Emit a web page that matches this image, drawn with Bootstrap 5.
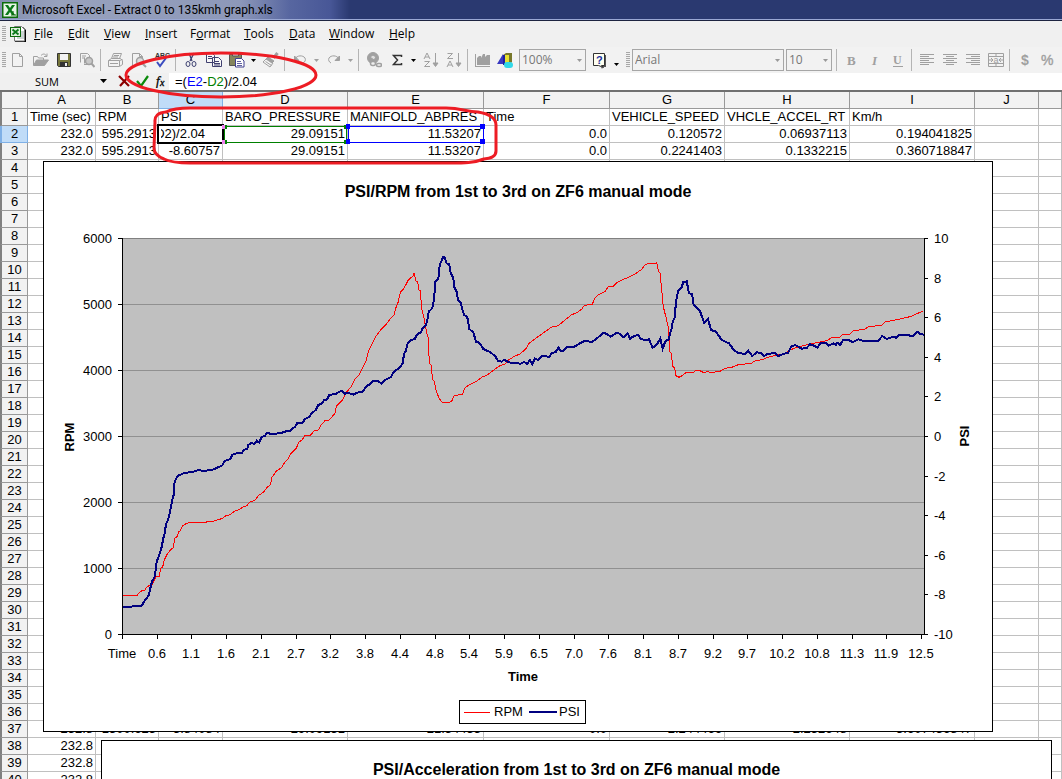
<!DOCTYPE html>
<html lang="en">
<head>
<meta charset="utf-8">
<meta name="viewport" content="width=device-width, initial-scale=1">
<title>Microsoft Excel - Extract 0 to 135kmh graph.xls</title>
<link href="https://cdn.jsdelivr.net/npm/bootstrap@5.3.0/dist/css/bootstrap.min.css" rel="stylesheet">
<style>
  body { font: 12px/16px "Open Sans", "Noto Sans", sans-serif; color: #000; background: #fff; }
  .excel { height: 100vh; }
  .title-bar, .menu-bar, .tool-bar, .formula-bar { flex: none; }
  .title-bar { height: 21px; padding-left: 2px; gap: 4px; border-bottom: 1px solid #1d2440; box-shadow: inset 0 -1px #9aa8d4;
    background: linear-gradient(90deg, #8490b0 0, #98a2bd 60px, #8d98b9 240px, #5766a0 290px, #485797 330px, #2a3970 350px); }
  .title-bar h1 { font: 400 12px/18px Roboto, sans-serif; }
  .chrome { background: #f0f0f0; }
  .menu-bar, .tool-bar { height: 26px; }
  .tool-bar { background: #f2f2f2; }
  .grip { width: 4px; height: 16px; margin-left: 2px; flex: none;
    background: repeating-linear-gradient(#a8a8a8 0 1px, #f0f0f0 1px 2px); }
  .menus { display: grid; grid-template-columns: 34px 36px 41px 45px 54px 45px 40px 60px 40px; }
  .menus button, .tb, .arrow { border: 0; background: none; padding: 0; color: inherit; }
  .menus button { padding-left: 8px; text-align: left; white-space: nowrap; }
  .tb { width: 23px; height: 22px; flex: none; line-height: 0; }
  .arrow { width: 11px; height: 22px; flex: none; line-height: 0; }
  .menus button.off, .tb.off, .arrow.off { color: #a0a0a0; }
  .divide { width: 1px; height: 22px; margin: 0 3px 0 2px; background: #b4b4b4; flex: none; }
  .pick { appearance: none; height: 22px; border: 1px solid #a6a6a6; border-radius: 0; padding: 0 2px 1px; color: #777; flex: none;
    font: 12px/18px "Open Sans", "Noto Sans", sans-serif; background: #f2f2f2 url("data:image/svg+xml,%3Csvg xmlns='http://www.w3.org/2000/svg' width='5' height='3'%3E%3Cpath d='M0 0h5L2.500 3z' fill='%23999'/%3E%3C/svg%3E") no-repeat right 3px center; opacity: 1; }
  .pick-zoom { width: 67px; margin: 0 2px; }
  .pick-font { width: 152px; margin: 0 2px; }
  .pick-size { width: 46px; margin-right: 2px; }
  .formula-bar { height: 17px; }
  .name-box { width: 94px; border: 0; background: none; text-align: center; font-size: 11px; line-height: 15px; padding: 0; height: 16px; }
  .fb { width: 18px; height: 16px; border: 0; background: none; padding: 0; line-height: 0; flex: none; }
  .fb-list { margin-right: 3px; }
  .formula { font: 13px/17px "Liberation Sans", sans-serif; background: #fff; padding-left: 6px; outline: 0; white-space: pre; }
  .ref-e { color: #00f; } .ref-d { color: #008000; }
  .sheet { border-top: 2px solid #707070; font: 13px/16px "Liberation Sans", sans-serif; min-height: 0; }
  .grid-table { table-layout: fixed; width: 100%; border-collapse: separate; border-spacing: 0; }
  .grid-table th, .grid-table td { height: 17px; line-height: 16px; padding: 0 2px; font-weight: 400; white-space: nowrap; overflow: hidden; border: 0 solid #c0c0c0; border-width: 0 1px 1px 0; }
  .grid-table th { background: #f2f2f2; text-align: center; border-color: #999; }
  .grid-table th:first-child { border-left: 2px solid #808080; }
  .grid-table th.picked { background: #c0dcf8; border-color: #7fb0e6; }
  .num { text-align: right; }
  .editing { display: flex; justify-content: flex-end; overflow: hidden; padding-right: 14px; margin-right: 1px; }
  .float-chart { position: absolute; background: #fff; border: 1px solid #000; }
  .chart-rpm { left: 43px; top: 69px; }
  .chart-accel { left: 101px; top: 648px; width: 951px; height: 200px; }
  .chart-accel h2 { font-size: 16px; line-height: 20px; font-weight: 700; margin: 19px 0 0; }
  .marks { position: absolute; left: 0; top: 0; pointer-events: none; }
  svg text { font-family: "Liberation Sans", sans-serif; }
  .axis-label { font-size: 13px; }
  .axis-name { font-size: 13px; font-weight: 700; }
</style>
</head>
<body class="overflow-hidden">
<div class="excel d-flex flex-column position-relative overflow-hidden">
  <header class="title-bar d-flex align-items-center">
    <svg width="16" height="16" viewBox="0 0 16 16"><rect width="16" height="16" fill="#0b6b0b"/><rect x="1.500" y="1.500" width="13" height="13" fill="#e8f5e8"/><path d="M3 3h3l2 3 2-3h3L9.500 8l3.500 5h-3L8 10l-2 3H3l3.500-5z" fill="#0b7a1a"/><path d="M11 9v4M9 13h5" stroke="#0b6b0b"/></svg>
    <h1 class="m-0">Microsoft Excel - Extract 0 to 135kmh graph.xls</h1>
  </header>

  <nav class="chrome menu-bar d-flex align-items-center" aria-label="Menu">
    <span class="grip"></span>
    <svg class="ms-1 flex-shrink-0" width="16" height="17" viewBox="0 0 16 17"><path d="M5 1h8l3 3v12H5z" fill="#000"/><path d="M4.500.500h7l3 3V15h-10z" fill="#fff" stroke="#777"/><path d="M10 6h4M10 8h4M7 12h7M7 10h7" stroke="#9aa"/><rect y="1" width="11" height="10" fill="#0b6b0b"/><rect x="1" y="2" width="9" height="8" fill="#dff0df"/><path d="M2.500 3.500l6 5M8.500 3.500l-6 5" stroke="#0b7a1a" stroke-width="1.800"/></svg>
    <div class="menus">
      <button type="button"><u>F</u>ile</button><button type="button"><u>E</u>dit</button><button type="button"><u>V</u>iew</button><button type="button"><u>I</u>nsert</button><button type="button">F<u>o</u>rmat</button><button type="button"><u>T</u>ools</button><button type="button"><u>D</u>ata</button><button type="button"><u>W</u>indow</button><button type="button"><u>H</u>elp</button>
    </div>
  </nav>

  <div class="tool-bar d-flex align-items-center" role="toolbar" aria-label="Standard and formatting">
    <span class="grip"></span>
    <button type="button" class="tb off" aria-label="New"><svg width="16" height="16" fill="none" stroke="currentColor"><path d="M2.500 1.500h7l3 3v10h-10zM9.500 1.500v3h3"/></svg></button>
    <button type="button" class="tb off" aria-label="Open"><svg width="18" height="16" fill="none" stroke="currentColor"><path d="M9 3.500c2-2 4-2 5.500.500M15 1.500v3h-3"/><path d="M1.500 13V4.500h4l1 1.500h5v2" /><path d="M1.500 13.500l3-5.500h12l-4 5.500z" fill="currentColor"/></svg></button>
    <button type="button" class="tb" aria-label="Save"><svg width="16" height="16"><path d="M1.500 1.500h13v13h-12l-1-1z" fill="#77773c" stroke="#333"/><path d="M4 2h8v6H4z" fill="#f2f2f2"/><path d="M4 10h8v4H4z" fill="#333"/><path d="M9 11h2v3H9z" fill="#eee"/></svg></button>
    <button type="button" class="tb off" aria-label="Search"><svg width="16" height="16" fill="none" stroke="currentColor"><path d="M1.500 10.500v-9h7l2 2v3M3 4h4M3 6h3M5.500 11.500v-6M5 12.500h4"/><circle cx="10" cy="9" r="3.500" fill="#c8c8c8" stroke-width="1.500"/><path d="M12.500 11.500l3 3.500" stroke-width="2"/></svg></button>
    <span class="divide"></span>
    <button type="button" class="tb off" aria-label="Print"><svg width="17" height="16" fill="none" stroke="currentColor"><path d="M4.500 6.500l2-5h8l-2 5M7 3.500h5M6 5h5M1.500 8.500l3-2h9l2 2v4l-3 2h-11zM1.500 8.500h11v5.500M12.500 8.500l3-1M3 11.500h8"/></svg></button>
    <button type="button" class="tb off" aria-label="Print preview"><svg width="16" height="16" fill="none" stroke="currentColor"><path d="M5 14.500H1.500v-13h7l3 3v2M8.500 1.500v3h3"/><circle cx="9" cy="9" r="3.500" fill="#ddd" stroke-width="1.500"/><path d="M11.500 11.500l3.500 3.500" stroke-width="2"/></svg></button>
    <button type="button" class="tb" aria-label="Spelling"><svg width="17" height="18"><text x="2" y="7" font-size="7" font-weight="700" fill="#333">ABC</text><path d="M4 11l3 4 6-8" fill="none" stroke="#3a4cc0" stroke-width="2"/></svg></button>
    <span class="divide"></span>
    <button type="button" class="tb" aria-label="Cut"><svg width="16" height="16" fill="none" stroke="#3c4070"><path d="M6 1l3 8M11 1L7 9" stroke-width="1.300"/><ellipse cx="5" cy="12" rx="2" ry="2.500"/><ellipse cx="11" cy="12" rx="2" ry="2.500"/></svg></button>
    <button type="button" class="tb" aria-label="Copy"><svg width="16" height="16" fill="#f8f8f8" stroke="#404070"><path d="M.500 1.500h6l2 2v7h-8zM6.500 5.500h6l3 3v6h-9z"/><path d="M2 4.500h4M2 6.500h4M8 9.500h5M8 11.500h6M8 13h6"/></svg></button>
    <button type="button" class="tb" aria-label="Paste"><svg width="17" height="16"><path d="M1.500 2.500h12v11h-12z" fill="#85855c" stroke="#555"/><path d="M4.500 1h6v3h-6z" fill="#ddd" stroke="#555"/><path d="M7.500 6.500h6l2.500 2.500v6H7.500z" fill="#fff" stroke="#404090"/><path d="M9 9.500h4M9 11.500h5M9 13.500h5" stroke="#6060a0"/></svg></button>
    <button type="button" class="arrow" aria-label="Paste options"><svg width="5" height="3"><path d="M0 0h5L2.500 3z"/></svg></button>
    <button type="button" class="tb off" aria-label="Format painter"><svg width="17" height="16" fill="none" stroke="currentColor"><path d="M15.500 1l-4 5" stroke-width="3"/><path d="M6 5l6 4-2 2-6-4z" fill="currentColor"/><path d="M4 7l-3 3 7 5 3-4M3.500 9.500l6 4" /></svg></button>
    <span class="divide"></span>
    <button type="button" class="tb off" aria-label="Undo"><svg width="16" height="16" fill="none" stroke="currentColor"><path d="M3 7c2-4 8-4 10-1 1 2 0 4-2 5"/><path d="M2.500 4v4.500H7z" fill="currentColor"/></svg></button>
    <button type="button" class="arrow off" aria-label="Undo list"><svg width="5" height="3" fill="currentColor"><path d="M0 0h5L2.500 3z"/></svg></button>
    <button type="button" class="tb off" aria-label="Redo"><svg width="16" height="16" fill="none" stroke="currentColor"><path d="M13 7C11 3 5 3 3 6c-1 2 0 4 2 5"/><path d="M13.500 4v4.500H9z" fill="currentColor"/></svg></button>
    <button type="button" class="arrow off" aria-label="Redo list"><svg width="5" height="3" fill="currentColor"><path d="M0 0h5L2.500 3z"/></svg></button>
    <span class="divide"></span>
    <button type="button" class="tb off" aria-label="Insert hyperlink"><svg width="16" height="16" fill="none" stroke="currentColor"><circle cx="7" cy="6" r="5.500" fill="currentColor"/><path d="M4 5l3-2 3 2-2 3z" fill="#ddd"/><rect x="4.500" y="9.500" width="5" height="4" rx="2" fill="#eee" stroke-width="1.500"/><rect x="10.500" y="11.500" width="5" height="3" rx="1.500" stroke-width="1.500"/></svg></button>
    <button type="button" class="tb" aria-label="AutoSum"><svg width="16" height="16"><path d="M12.500 5V3.500h-8L8.500 8l-4 4.500h8V11" fill="none" stroke="#333" stroke-width="1.500"/></svg></button>
    <button type="button" class="arrow" aria-label="AutoSum options"><svg width="5" height="3"><path d="M0 0h5L2.500 3z"/></svg></button>
    <button type="button" class="tb off" aria-label="Sort ascending"><svg width="16" height="16" fill="none" stroke="currentColor"><path d="M1 7l3-6 3 6M2 5h4M1.500 9.500h5l-5 5h5.500"/><path d="M12.500 1v13M10 11l2.500 3.500L15 11z" fill="currentColor"/></svg></button>
    <button type="button" class="tb off" aria-label="Sort descending"><svg width="16" height="16" fill="none" stroke="currentColor"><path d="M1.500 1.500h5l-5 5H7M1 15l3-6 3 6M2 13h4"/><path d="M12.500 1v13M10 11l2.500 3.500L15 11z" fill="currentColor"/></svg></button>
    <span class="divide"></span>
    <button type="button" class="tb off" aria-label="Chart wizard"><svg width="16" height="16" fill="currentColor"><path d="M0 2h1v12h14v1H0zM2 6l2-2h2v2l2-4h2v3l2-2h3v10H2z"/></svg></button>
    <button type="button" class="tb" aria-label="Drawing"><svg width="17" height="17"><path d="M6 3l3-2h6v9l-2 2H6z" fill="#77772a"/><path d="M6 3h6v8H6z" fill="#e8e030"/><path d="M0 12L6 2v10z" fill="#3838c0"/><path d="M7 3v10" stroke="#2020a0" stroke-width="2"/><rect x="7" y="10" width="9" height="6" rx="3" fill="#30d8e8"/></svg></button>
    <select class="pick pick-zoom" aria-label="Zoom"><option>100%</option></select>
    <button type="button" class="tb" aria-label="Help"><svg width="16" height="17"><path d="M4 3h10v12h-3l-1 2z" fill="#555"/><path d="M1.500 1.500h11v12h-3l2 2-5-2h-5z" fill="#fffff0" stroke="#333"/><text x="4" y="12" font-size="11" font-weight="700" fill="#2030a0">?</text></svg></button>
    <button type="button" class="arrow pt-2" aria-label="Toolbar options"><svg width="5" height="3"><path d="M0 0h5L2.500 3z"/></svg></button>
    <span class="grip ms-1"></span>
    <select class="pick pick-font" aria-label="Font"><option>Arial</option></select>
    <select class="pick pick-size" aria-label="Font size"><option>10</option></select>
    <span class="divide"></span>
    <button type="button" class="tb off" aria-label="Bold"><svg width="16" height="16" fill="currentColor"><text x="3" y="13" font-size="13" font-weight="700" style="font-family:'Liberation Serif',serif">B</text></svg></button>
    <button type="button" class="tb off" aria-label="Italic"><svg width="16" height="16" fill="currentColor"><text x="5" y="13" font-size="13" font-weight="700" font-style="italic" style="font-family:'Liberation Serif',serif">I</text></svg></button>
    <button type="button" class="tb off" aria-label="Underline"><svg width="16" height="16" fill="currentColor"><text x="3" y="12" font-size="12" font-weight="700" style="font-family:'Liberation Serif',serif">U</text><path d="M3 14h10v1H3z"/></svg></button>
    <span class="divide"></span>
    <button type="button" class="tb off" aria-label="Align left"><svg width="16" height="16" stroke="currentColor"><path d="M1 2.500h14M1 4.500h9M1 6.500h14M1 8.500h9M1 10.500h14M1 12.500h9"/></svg></button>
    <button type="button" class="tb off" aria-label="Centre"><svg width="16" height="16" stroke="currentColor"><path d="M1 2.500h14M4 4.500h8M1 6.500h14M4 8.500h8M1 10.500h14M4 12.500h8"/></svg></button>
    <button type="button" class="tb off" aria-label="Align right"><svg width="16" height="16" stroke="currentColor"><path d="M1 2.500h14M6 4.500h9M1 6.500h14M6 8.500h9M1 10.500h14M6 12.500h9"/></svg></button>
    <button type="button" class="tb off" aria-label="Merge and centre"><svg width="16" height="16" fill="none" stroke="currentColor"><path d="M.500 1.500h15v13H.500zM.500 4.500h15M.500 11.500h15M8 1v3M8 12v3M1 8h4M11 8h4M3 6l2 2-2 2M13 6l-2 2 2 2"/><text x="5.500" y="11" font-size="9" fill="currentColor" stroke="none">a</text></svg></button>
    <span class="divide"></span>
    <button type="button" class="tb off" aria-label="Currency"><svg width="16" height="16" fill="currentColor"><text x="4" y="13" font-size="14" font-weight="700">$</text></svg></button>
    <button type="button" class="tb off" aria-label="Percent"><svg width="16" height="16" fill="currentColor"><text x="1" y="13" font-size="14" stroke="currentColor" stroke-width=".4">%</text></svg></button>
  </div>

  <div class="chrome formula-bar d-flex">
    <input class="name-box" aria-label="Name box" value="SUM">
    <button type="button" class="fb fb-list" aria-label="Name list"><svg width="7" height="4"><path d="M0 0h7L3.500 4z"/></svg></button>
    <button type="button" class="fb" aria-label="Cancel"><svg width="13" height="12"><path d="M1 1l10 10M11 1L2 11" stroke="#8b0000" stroke-width="2.200"/></svg></button>
    <button type="button" class="fb" aria-label="Enter"><svg width="13" height="12"><path d="M1 6l4 5 7-10" fill="none" stroke="#0a8a0a" stroke-width="2.200"/></svg></button>
    <button type="button" class="fb" aria-label="Insert function"><svg width="14" height="14"><text x="3" y="11" font-size="13" font-style="italic" style="font-family:'Liberation Serif',serif" stroke="#000" stroke-width=".3">f</text><text x="7" y="12" font-size="10" font-style="italic" style="font-family:'Liberation Serif',serif" stroke="#000" stroke-width=".3">x</text></svg></button>
    <div class="formula flex-grow-1" role="textbox" contenteditable="true" aria-label="Formula" spellcheck="false">=(<span class="ref-e">E2</span>-<span class="ref-d">D2</span>)/2.04</div>
  </div>

  <main class="sheet flex-grow-1 position-relative overflow-hidden">
    <table class="grid-table">
      <colgroup><col style="width:28px"><col style="width:68px"><col style="width:63px"><col style="width:64px"><col style="width:125px"><col style="width:136px"><col style="width:126px"><col style="width:115px"><col style="width:125px"><col style="width:125px"><col style="width:64px"><col></colgroup>
      <thead><tr><th></th><th>A</th><th>B</th><th class="picked">C</th><th>D</th><th>E</th><th>F</th><th>G</th><th>H</th><th>I</th><th>J</th><th></th></tr></thead>
      <tbody id="rows"></tbody>
    </table>

    <figure class="float-chart chart-rpm m-0">
      <svg class="d-block" id="rpm" width="948" height="569" viewBox="44 162 948 569" role="img" aria-label="PSI/RPM from 1st to 3rd on ZF6 manual mode">
        <text x="518" y="197" font-size="16" font-weight="700" text-anchor="middle">PSI/RPM from 1st to 3rd on ZF6 manual mode</text>
        <rect x="122" y="238" width="802" height="396" fill="#c0c0c0"/>
        <g id="axes" shape-rendering="crispEdges" stroke="#000"></g>
        <g id="labels" class="axis-label"></g>
        <polyline id="line-rpm" fill="none" stroke="#f00" shape-rendering="crispEdges"/>
        <polyline id="line-psi" fill="none" stroke="#000080" stroke-width="2" shape-rendering="crispEdges"/>
        <text class="axis-name" x="523" y="681" text-anchor="middle">Time</text>
        <text class="axis-name" transform="translate(74 437) rotate(-90)" text-anchor="middle">RPM</text>
        <text class="axis-name" transform="translate(969 436) rotate(-90)" text-anchor="middle">PSI</text>
        <g shape-rendering="crispEdges"><rect x="459.500" y="700.500" width="126" height="23" fill="#fff" stroke="#000"/><path d="M464 712.500h26" stroke="#f00"/><path d="M529 712h28" stroke="#000080" stroke-width="2"/></g>
        <text class="axis-label" x="494" y="716">RPM</text><text class="axis-label" x="559" y="716">PSI</text>
      </svg>
    </figure>
    <section class="float-chart chart-accel text-center"><h2>PSI/Acceleration from 1st to 3rd on ZF6 manual mode</h2></section>
  </main>

  <svg class="marks" width="520" height="180" aria-hidden="true">
    <g shape-rendering="crispEdges" fill="none">
      <rect x="158" y="125" width="65" height="18" stroke="#000" stroke-width="2"/>
      <rect x="224" y="126" width="122" height="16" stroke="#008000"/>
      <rect x="348" y="126" width="135" height="16" stroke="#00f"/>
      <path d="M222 125h3v4h-3zM222 140h3v4h-3z" fill="#f080f0"/>
      <path d="M225 125h2v4h-2zM225 140h2v4h-2zM344 125h3v4h-3zM344 140h3v4h-3z" fill="#008000"/>
      <path d="M346 124h4v5h-4zM346 139h4v5h-4zM480 124h5v5h-5zM480 139h5v5h-5z" fill="#00f"/>
    </g>
    <g fill="none" stroke="#ed1c24" stroke-width="3">
      <ellipse cx="221" cy="75" rx="95" ry="22"/>
      <path d="M190 108H446C462 108 466 112 478 112Q496 115 496 125V151Q496 158 484 159C474 163 464 163 450 163H190Q172 163 164 159Q154 155 154 148L155 122Q154 113 166 112Q174 108 190 108Z"/>
    </g>
  </svg>
</div>

<script src="https://cdn.jsdelivr.net/npm/bootstrap@5.3.0/dist/js/bootstrap.bundle.min.js"></script>
<script>
  // Worksheet cells by row number; rows that are not listed are empty.
  const cells = {
    1: ["Time (sec)", "RPM", "PSI", "BARO_PRESSURE", "MANIFOLD_ABPRES", "Time", "VEHICLE_SPEED", "VHCLE_ACCEL_RT", "Km/h"],
    2: ["232.0", "595.2913", "D2)/2.04", "29.09151", "11.53207", "0.0", "0.120572", "0.06937113", "0.194041825"],
    3: ["232.0", "595.2913", "-8.60757", "29.09151", "11.53207", "0.0", "0.2241403", "0.1332215", "0.360718847"],
    37: ["232.8", "1300.625", "-3.84084", "29.09151", "21.54455", "0.0", "2.244466", "2.252648", "3.607456847"],
    38: ["232.8"], 39: ["232.8"], 40: ["232.8"]
  };
  let html = "";
  for (let r = 1; r <= 40; r++) {
    html += `<tr><th${r === 2 ? ' class="picked"' : ""}>${r}</th>`;
    for (let c = 0; c < 11; c++) {
      const v = (cells[r] || [])[c] || "";
      html += r === 2 && c === 2 ? `<td><div class="editing">${v}</div></td>` : `<td class="${r > 1 ? "num" : ""}">${v}</td>`;
    }
    html += "</tr>";
  }
  document.getElementById("rows").innerHTML = html;

  // Axes, grid lines and tick labels.
  let axes = '<path d="M122 238.500h802" stroke="#808080"/>', labels = "";
  for (let i = 0; i <= 6; i++) {
    const y = 634 - i * 66;
    if (i && i < 6) axes += `<path d="M123 ${y}.5h801" stroke="#909090"/>`;
    axes += `<path d="M118 ${y}.5h4"/>`;
    labels += `<text x="112" y="${y + 5}" text-anchor="end">${i * 1000}</text>`;
  }
  for (let i = 0; i <= 10; i++) {
    const y = Math.round(634 - i * 39.6);
    axes += `<path d="M924 ${y}.5h4"/>`;
    labels += `<text x="934" y="${y + 5}">${i * 2 - 10}</text>`;
  }
  ["Time", "0.6", "1.1", "1.6", "2.1", "2.7", "3.2", "3.8", "4.4", "4.8", "5.4", "5.9", "6.5", "7.0", "7.6", "8.1", "8.7", "9.2", "9.7", "10.2", "10.8", "11.3", "11.9", "12.5"].forEach((t, i) => {
    const x = Math.round(122 + i * 34.74);
    axes += `<path d="M${x}.5 634v5"/>`;
    labels += `<text x="${x}" y="658" text-anchor="middle">${t}</text>`;
  });
  axes += '<path d="M122.500 238v397M924.500 238v397M122 634.500h806"/>';
  document.getElementById("axes").innerHTML = axes;
  document.getElementById("labels").innerHTML = labels;

  // Each run is an origin followed by samples in thirds of a chart unit.
  const plot = (id, runs) => document.getElementById(id).setAttribute("points",
    runs.map(([x0, y0, s]) => s.split(" ").map(p => { const [x, y] = p.split(","); return (x0 + x / 3).toFixed(1) + "," + (y0 + y / 3).toFixed(1); }).join(" ")).join(" "));
  plot("line-rpm", [
    [50, 420, "218,525 262,525 268,518 275,512 284,511 290,502 297,497 306,495 313,480 318,469 328,469 332,445 338,441 342,422 350,405 357,395 365,386 370,384 374,355 381,350 386,336 391,332 397,318 410,310 425,307 468,307 474,304 493,303 518,295 527,287 540,284 556,272 567,269 578,262 590,257 600,246 615,241 625,227 640,217 653,200 661,195 666,172 680,152 694,144 705,125 714,118 721,102 738,86 747,66 757,60 764,46 782,45 793,32 805,30 813,15 825,2 838,0 855,-20 859,-42"],
    [340, 230, "0,518 8,510 18,488 35,468 45,447 58,435 65,418 78,392 85,365 95,345 105,323 120,302 135,287 150,268 162,255 167,235 175,215 181,187 192,175 205,150 220,137 223,128 227,152 233,157 237,180 241,182 245,237 250,255 254,275 260,310 265,322 268,400 273,405 278,448 283,455 288,480 297,505 307,517 320,519 335,514 341,498 350,496 368,492 375,473 390,463 410,454 425,442 443,434 460,421 480,407 495,402 505,390 525,378 540,372 557,357 567,340 590,323 615,305 635,291 655,287 675,270 695,254 710,248 725,238 733,226 757,223 763,207 775,194 795,185 805,170 817,171 830,158 850,148 866,142"],
    [630, 230, "0,140 15,132 35,118 45,105 55,100 75,100 80,98 85,122 90,130 95,178 100,230 108,262 115,292 119,365 124,370 128,408 134,415 138,437 147,442 158,436 168,428 190,427 197,422 210,422 222,428 232,424 243,428 270,424 285,415 305,412 325,404 365,400 372,394 400,388 412,382 430,378 450,374 470,368 480,360 500,352 525,346 550,340 590,332 605,323 630,321 637,314 660,313 668,303 705,297 715,290 755,286 765,276 800,269 845,259 860,251 878,244"]
  ]);
  plot("line-psi", [
    [50, 420, "220,560 245,560 250,558 275,557 282,545 290,535 297,525 301,505 306,485 314,470 317,448 320,425 328,405 335,380 340,355 344,340 348,312 355,298 361,270 368,235 371,225 373,190 380,172 385,167 400,160 430,155 445,150 460,153 485,150 500,144 517,136 525,122 540,118 547,104 560,100 577,98 580,91 592,86 595,75 605,68 612,72 620,62 628,68 634,52 645,47 652,38 662,42 690,40 708,34 720,32 735,20 742,9 758,8"],
    [50, 220, "765,597 778,590 785,580 797,570 805,555 815,550 822,541 832,538 838,525 858,521 875,512 887,523"],
    [340, 230, "8,484 15,490 25,488 40,494 50,488 68,485 78,470 90,462 100,453 115,454 125,461 135,450 152,442 162,425 180,412 188,400 192,372 198,362 202,343 210,332 224,327 230,315 243,306 248,294 257,285 262,272 266,245 277,235 282,210 286,155 295,147 299,105 305,92 310,80 315,85 320,100 328,103 332,128 340,145 343,172 350,185 354,210 362,218 366,235 373,255 382,262 388,297 400,307 408,335 418,338 430,357 450,366 465,378 475,393 485,395 492,389 505,396 520,400 530,398 540,402 552,396 562,402 570,390 577,402 585,386 595,390 605,378 628,380 635,370 648,365 655,352 662,364 670,364 680,352 700,352 715,343 735,332 755,336 768,328 790,308 800,312 812,320 830,308 840,312 850,322 863,310"],
    [630, 230, "0,326 12,318 25,315 32,326 45,331 57,328 68,353 80,344 91,326 98,356 106,334 117,328 120,310 125,295 127,280 134,262 138,215 145,182 155,172 160,156 170,154 177,190 186,192 191,225 210,243 222,278 234,266 243,300 258,305 275,330 297,340 310,358 325,370 345,371 355,362 367,378 380,367 392,369 402,379 412,371 436,370 445,378 460,372 475,368 483,350 495,345 505,350 515,356 530,354 540,343 552,347 562,353 572,340 588,338 595,347 610,340 618,345 622,338 630,345 640,330 655,329 668,337 685,328 705,334 745,332 757,318 770,327 790,320 798,323 808,315 850,317 862,305 872,313 883,314"]
  ]);
</script>
</body>
</html>
